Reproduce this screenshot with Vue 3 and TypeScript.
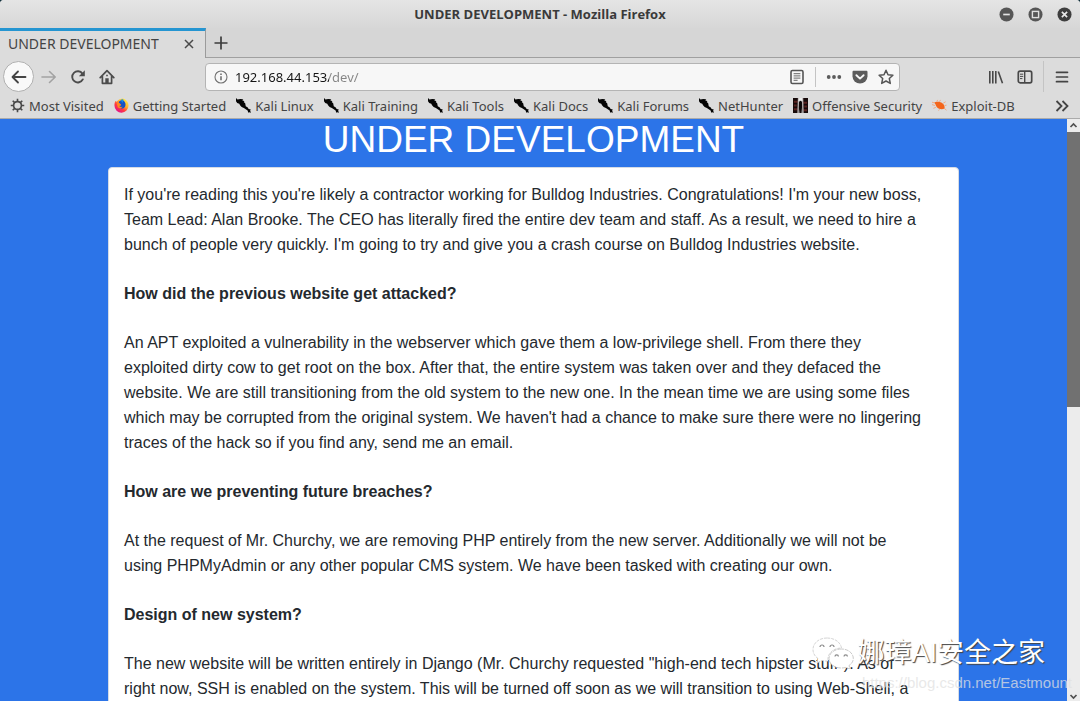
<script setup lang="ts">
import { ref } from 'vue'

type IconKind = 'gear' | 'firefox' | 'kali' | 'offsec' | 'exploit'

interface Bookmark {
  label: string
  icon: IconKind
}

interface Section {
  heading?: string
  body: string
}

const pageTitle = 'UNDER DEVELOPMENT'
const address = ref('192.168.44.153/dev/')

const bookmarks: Bookmark[] = [
  { label: 'Most Visited', icon: 'gear' },
  { label: 'Getting Started', icon: 'firefox' },
  { label: 'Kali Linux', icon: 'kali' },
  { label: 'Kali Training', icon: 'kali' },
  { label: 'Kali Tools', icon: 'kali' },
  { label: 'Kali Docs', icon: 'kali' },
  { label: 'Kali Forums', icon: 'kali' },
  { label: 'NetHunter', icon: 'kali' },
  { label: 'Offensive Security', icon: 'offsec' },
  { label: 'Exploit-DB', icon: 'exploit' },
]

const sections: Section[] = [
  {
    body: "If you're reading this you're likely a contractor working for Bulldog Industries. Congratulations! I'm your new boss, Team Lead: Alan Brooke. The CEO has literally fired the entire dev team and staff. As a result, we need to hire a bunch of people very quickly. I'm going to try and give you a crash course on Bulldog Industries website.",
  },
  {
    heading: 'How did the previous website get attacked?',
    body: "An APT exploited a vulnerability in the webserver which gave them a low-privilege shell. From there they exploited dirty cow to get root on the box. After that, the entire system was taken over and they defaced the website. We are still transitioning from the old system to the new one. In the mean time we are using some files which may be corrupted from the original system. We haven't had a chance to make sure there were no lingering traces of the hack so if you find any, send me an email.",
  },
  {
    heading: 'How are we preventing future breaches?',
    body: 'At the request of Mr. Churchy, we are removing PHP entirely from the new server. Additionally we will not be using PHPMyAdmin or any other popular CMS system. We have been tasked with creating our own.',
  },
  {
    heading: 'Design of new system?',
    body: 'The new website will be written entirely in Django (Mr. Churchy requested "high-end tech hipster stuff"). As of right now, SSH is enabled on the system. This will be turned off soon as we will transition to using Web-Shell, a',
  },
]
</script>

<template>
  <div class="window">
    <header class="chrome">
      <div class="titlebar">
        <span class="title">{{ pageTitle }} - Mozilla Firefox</span>
        <div class="controls">
          <button type="button" aria-label="Minimize">
            <svg viewBox="0 0 16 16"><circle cx="8" cy="8" r="7.5" fill="#565656" /><path d="M4.5 8h7" stroke="#e4e4e4" stroke-width="1.8" /></svg>
          </button>
          <button type="button" aria-label="Maximize">
            <svg viewBox="0 0 16 16"><circle cx="8" cy="8" r="7.5" fill="#565656" /><rect x="4.7" y="4.7" width="6.6" height="6.6" fill="none" stroke="#e0e0e0" stroke-width="1.5" /></svg>
          </button>
          <button type="button" aria-label="Close">
            <svg viewBox="0 0 16 16"><circle cx="8" cy="8" r="7.5" fill="#3e3e3e" /><path d="M5.2 5.2l5.6 5.6M10.8 5.2l-5.6 5.6" stroke="#e8e8e8" stroke-width="1.8" /></svg>
          </button>
        </div>
      </div>

      <div class="tabs">
        <div class="tab">
          <span>{{ pageTitle }}</span>
          <button type="button" aria-label="Close tab">
            <svg class="i16" viewBox="0 0 16 16"><path d="M4 4l8 8M12 4l-8 8" stroke="#4a4a4a" stroke-width="1.5" fill="none" /></svg>
          </button>
        </div>
        <div class="tab-rest">
          <button type="button" aria-label="New tab">
            <svg class="i16" viewBox="0 0 16 16"><path d="M8 1.5v13M1.5 8h13" stroke="#3c3c3c" stroke-width="1.7" fill="none" /></svg>
          </button>
        </div>
      </div>

      <div class="toolbar">
        <div class="nav-buttons">
          <button type="button" class="back" aria-label="Back">
            <svg class="i16" viewBox="0 0 16 16"><path d="M14.500 8H2M7 2.500L1.500 8 7 13.500" fill="none" stroke="#444" stroke-width="1.800" stroke-linejoin="round" stroke-linecap="round" /></svg>
          </button>
          <button type="button" aria-label="Forward">
            <svg class="i16" viewBox="0 0 16 16"><path d="M1 8h13M8.500 2.500L14.200 8l-5.700 5.500" fill="none" stroke="#a2a2a2" stroke-width="1.600" stroke-linejoin="round" stroke-linecap="round" /></svg>
          </button>
          <button type="button" aria-label="Reload">
            <svg class="i16" viewBox="0 0 16 16"><path d="M12.8 10.4A5.6 5.6 0 1 1 12.4 4.6" fill="none" stroke="#4c4c4c" stroke-width="1.9" stroke-linecap="round" /><path d="M14.8 1.200v6H8.800z" fill="#4c4c4c" /></svg>
          </button>
          <button type="button" aria-label="Home">
            <svg class="i16" viewBox="0 0 16 16"><path d="M1.200 8.600L8 1.600l6.800 7M3.400 7.500v6.800h9.200V7.500" fill="none" stroke="#4c4c4c" stroke-width="1.700" stroke-linejoin="round" stroke-linecap="round" /><path d="M6.300 14V9.200h3.400V14z" fill="#4c4c4c" /><path d="M7.200 5.700h1.600v1.600H7.200z" fill="#4c4c4c" /></svg>
          </button>
        </div>

        <form class="urlbar" @submit.prevent>
          <svg class="i14" viewBox="0 0 14 14"><circle cx="7" cy="7" r="6" fill="none" stroke="#727272" stroke-width="1.1" /><path d="M7 6.2v4M7 3.4v1.5" stroke="#666" stroke-width="1.5" /></svg>
          <input v-model="address" type="text" aria-label="Address" spellcheck="false" />
          <button type="button" aria-label="Reader view">
            <svg class="i16" viewBox="0 0 16 16"><rect x="2" y="1.5" width="12" height="13" rx="1.4" fill="none" stroke="#555" stroke-width="1.6" /><path d="M4.6 4.7h6.8M4.6 6.9h6.8M4.6 9.1h6.8M4.6 11.3h4" stroke="#666" stroke-width="1" /></svg>
          </button>
          <i class="divider" />
          <button type="button" aria-label="Page actions">
            <svg class="i16" viewBox="0 0 16 16" fill="#5c5c5c"><circle cx="2.7" cy="8" r="1.9" /><circle cx="8" cy="8" r="1.9" /><circle cx="13.3" cy="8" r="1.9" /></svg>
          </button>
          <button type="button" aria-label="Save to Pocket">
            <svg class="i16" viewBox="0 0 16 16"><path d="M1.8 1.7h12.4c.8 0 1.3.5 1.3 1.3v4.3a7.5 7.2 0 0 1-15 0V3c0-.8.5-1.3 1.3-1.3z" fill="#5c5c5c" /><path d="M4.4 6.2L8 9.6l3.6-3.4" fill="none" stroke="#f7f7f7" stroke-width="1.9" stroke-linecap="round" stroke-linejoin="round" /></svg>
          </button>
          <button type="button" aria-label="Bookmark this page">
            <svg class="i16" viewBox="0 0 16 16"><path d="M8 1.3l2 4.4 4.9.5-3.6 3.3 1 4.9L8 12l-4.3 2.4 1-4.9L1.1 6.2l4.9-.5z" fill="none" stroke="#565656" stroke-width="1.5" stroke-linejoin="round" /></svg>
          </button>
        </form>

        <div class="tools">
          <button type="button" aria-label="Library">
            <svg class="i16" viewBox="0 0 16 16"><path d="M1.800 2v12.500M4.800 2v12.500M7.800 2v12.500M10.300 2.500l4.200 11.800" fill="none" stroke="#484848" stroke-width="1.600" /></svg>
          </button>
          <button type="button" aria-label="Sidebars">
            <svg class="i16" viewBox="0 0 16 16"><rect x="1.300" y="2.200" width="13.400" height="11.600" rx="1.800" fill="none" stroke="#484848" stroke-width="1.700" /><path d="M7.700 2.200v11.600" stroke="#484848" stroke-width="1.400" /><path d="M3 5.200h3.200M3 7.400h3.200M3 9.600h2.400" stroke="#484848" stroke-width="1" /></svg>
          </button>
          <i class="divider tall" />
          <button type="button" aria-label="Open menu">
            <svg class="i16" viewBox="0 0 16 16"><path d="M2.500 3.300h11M2.500 8h11M2.500 12.700h11" stroke="#444" stroke-width="1.700" stroke-linecap="round" /></svg>
          </button>
        </div>
      </div>

      <nav class="bookmarks" aria-label="Bookmarks">
        <a v-for="b in bookmarks" :key="b.label" href="#">
          <svg v-if="b.icon === 'gear'" class="fav" viewBox="0 0 16 16">
            <circle cx="8" cy="8" r="4.200" fill="none" stroke="#4a4a4a" stroke-width="1.800" />
            <path d="M8 .8v3M8 12.200v3M.8 8h3M12.200 8h3M2.900 2.900L5 5M11 11l2.100 2.100M13.100 2.900L11 5M5 11l-2.100 2.100" stroke="#4a4a4a" stroke-width="1.700" />
          </svg>
          <svg v-else-if="b.icon === 'firefox'" class="fav" viewBox="0 0 16 16">
            <defs>
              <linearGradient id="flame" x1=".85" y1=".05" x2=".2" y2=".9"><stop offset="0" stop-color="#fff14a" /><stop offset=".4" stop-color="#ffb02a" /><stop offset=".68" stop-color="#ff3b40" /><stop offset="1" stop-color="#e31587" /></linearGradient>
            </defs>
            <path d="M1.500 3.200l1.400.7C4.400 2 6.400 1 9 .6c3.700.5 6.500 3.800 6.500 7.500A7.500 7.500 0 0 1 .5 8.300C.4 6.300.8 4.700 1.500 3.200z" fill="url(#flame)" />
            <path d="M5 4.200C7 2 10.900 2.300 12 5.200c1 3.100-.7 6-3.900 6-2.200 0-3.600-1.300-3.800-2.600L7.600 8 6 6.300z" fill="#1453c4" />
            <path d="M7 2.200C8.700.8 10 1.200 10.300 2.400L9 5.200z" fill="#158be8" />
            <path d="M3 5.500l3 .2 1.800 1.700-2.400 1 1.800 1.200 2.300-.4-2.700 2L4 10z" fill="#ff8a1c" />
          </svg>
          <svg v-else-if="b.icon === 'kali'" class="fav" viewBox="0 0 16 16">
            <path d="M0 0l1.600 1.600L4.500 1l3.300.3-1.200 1L9 3.500l-.8.8 1.600 1.200.6 3.200 2.200 1.500.6 1.300 2.800 1-1 .9 1 2.300-2-.6-.9.6-.7-2.500-2.400-1.400-1.600-1.200L6 9.600 4.300 7.800 3.500 6.200 1.300 5.200 0 3.400z" fill="#050505" />
          </svg>
          <svg v-else-if="b.icon === 'offsec'" class="fav" viewBox="0 0 16 16">
            <path d="M0 0h16v16H0z" fill="#170a0a" /><path d="M1 4h4M1 8h3M11 5h4M12 9h3M1 12h4M11 13h4" stroke="#58211f" stroke-width="2" />
            <path d="M5.200 0h1.300l-.6 16H4.700zM9.600 0h1.300l.4 16H10z" fill="#c9c3c3" /><path d="M6.500 0h3l.5 3-2 2-2-2z" fill="#eee" /><path d="M7 3h2v10H7z" fill="#070707" /><path d="M6.200 10l.8 6H5.600zM9.600 10l.8 6H9z" fill="#aaa" />
          </svg>
          <svg v-else class="fav" viewBox="0 0 16 16">
            <path d="M2.500 4.500c3.200-1 6.700-.7 9.200 1.500 1.500 1.400 2 3.300 1.700 5.300-3 1.200-6 .6-7.900-1.200C4.200 8.900 4 7.300 3.300 6.200z" fill="#f4651a" />
            <path d="M5 4l1-2M8 4l1-2M3 8L0 7M4 10l-2.500 1M12 5.500l2.500-1.500M13.500 8l2-.3M8 12l-1 1.500M13 11l2.500 2M0 4.500l3 .8" stroke="#f79863" stroke-width=".8" />
          </svg>
          <span>{{ b.label }}</span>
        </a>
        <button type="button" aria-label="More bookmarks">
          <svg class="i16" viewBox="0 0 16 16"><path d="M2.500 3l5 5-5 5M8.500 3l5 5-5 5" fill="none" stroke="#444" stroke-width="1.800" /></svg>
        </button>
      </nav>
    </header>

    <div class="viewport">
      <main class="page">
        <h1>{{ pageTitle }}</h1>
        <article class="card">
          <template v-for="s in sections" :key="s.body">
            <h2 v-if="s.heading">{{ s.heading }}</h2>
            <p>{{ s.body }}</p>
          </template>
        </article>
      </main>
      <div class="scrollbar" aria-hidden="true">
        <svg class="arrow" viewBox="0 0 13 13"><path d="M3.500 8l3-3 3 3" fill="none" stroke="#505050" stroke-width="1.700" /></svg>
        <div class="thumb" />
        <div class="track" />
        <svg class="arrow" viewBox="0 0 13 13"><path d="M3.500 7l3 3 3-3" fill="none" stroke="#505050" stroke-width="1.700" /></svg>
      </div>
    </div>

    <div class="watermark">
      <div class="brand">
        <svg viewBox="0 0 42 32">
          <path d="M15 1C7 1 1 6 1 12.500c0 4 2 7 5 9L5 26l5-2.600c2 .6 4 .8 6 .6C15 16 22 11 29.500 11 28.500 5 22.500 1 15 1z" fill="#fff" stroke="#c9c9c9" stroke-width=".8" stroke-dasharray="3 1" />
          <path d="M29.500 12C22 12 17 16.500 17 21.500S22 31 29.500 31c1.600 0 3-.2 4.300-.6L38 32l-1-3.500c2.700-1.700 4.300-4.200 4.300-7C41.300 16.500 36.500 12 29.500 12z" fill="#fff" stroke="#bbb" stroke-width=".8" stroke-dasharray="4 1" />
          <path d="M8 10a2 2 0 0 1 4 0M18 10a2 2 0 0 1 4 0M23 19.500a1.700 1.700 0 0 1 3.400 0M32 19.500a1.700 1.700 0 0 1 3.400 0" fill="none" stroke="#888" stroke-width="1.200" />
        </svg>
        <span>娜璋AI安全之家</span>
      </div>
      <div class="source">https://blog.csdn.net/Eastmount</div>
    </div>
  </div>
</template>

<style>
body {
  margin: 0;
  background: #12313c;
}
</style>

<style scoped>
.window {
  position: relative;
  display: flex;
  flex-direction: column;
  height: 100vh;
  overflow: hidden;
  border-radius: 4px 4px 0 0;
  font-family: "Noto Sans", "Open Sans", sans-serif;
  font-size: 13px;
  color: #444;
}

button {
  display: flex;
  align-items: center;
  justify-content: center;
  padding: 0;
  border: 0;
  background: none;
}

svg {
  display: block;
  flex: none;
}

.i16 {
  width: 16px;
  height: 16px;
}

.i14 {
  width: 14px;
  height: 14px;
}

.chrome {
  flex: none;
  background: #dcdcdc;
  border-bottom: 1px solid #ababab;
}

.titlebar {
  display: grid;
  grid-template-columns: 1fr auto 1fr;
  align-items: center;
  height: 28px;
  background: linear-gradient(#e5e5e5, #d7d7d7);
}

.title {
  grid-column: 2;
  font-family: "Open Sans", sans-serif;
  font-weight: 700;
  line-height: 28px;
  color: #3a3a3a;
}

.controls {
  display: flex;
  justify-content: flex-end;
  gap: 14px;
  padding-right: 8px;
}

.controls svg {
  width: 15px;
  height: 15px;
}

.tabs {
  display: flex;
  height: 30px;
  background: #d6d6d6;
}

.tab {
  box-sizing: border-box;
  display: flex;
  align-items: center;
  justify-content: space-between;
  width: 206px;
  padding: 0 8px 2px;
  border-top: 3px solid #2595d1;
  border-right: 1px solid #9b9b9b;
  background: #dcdcdc;
  font-size: 14px;
  white-space: nowrap;
}

.tab-rest {
  display: flex;
  flex: 1;
  align-items: center;
  padding-left: 7px;
  border-bottom: 1px solid #a0a0a0;
}

.toolbar {
  display: flex;
  align-items: center;
  height: 37px;
}

.nav-buttons {
  display: flex;
  align-items: center;
  gap: 13px;
  width: 202px;
  padding-left: 3px;
}

.back {
  box-sizing: border-box;
  width: 31px;
  height: 31px;
  margin-right: -7px;
  border: 1px solid #b0b0b0;
  border-radius: 50%;
  background: #f9f9f9;
}

.nav-buttons .back + button {
  margin-left: 1px;
}

.urlbar {
  box-sizing: border-box;
  display: flex;
  flex: 1;
  align-items: center;
  gap: 10px;
  height: 28px;
  padding: 0 5px 0 8px;
  border: 1px solid #b4b4b4;
  border-radius: 4px;
  background: #f7f7f7;
}

.urlbar input {
  flex: 1;
  min-width: 0;
  padding: 0;
  border: 0;
  outline: 0;
  margin-left: -3px;
  font: inherit;
  color: transparent;
  background: linear-gradient(90deg, #151515 94px, #858585 94px);
  -webkit-background-clip: text;
  background-clip: text;
}

.divider {
  width: 1px;
  height: 20px;
  background: #c4c4c4;
}

.tall {
  height: 31px;
}

.tools {
  display: flex;
  align-items: center;
  justify-content: flex-end;
  gap: 10px;
  width: 170px;
  padding-right: 10px;
}

.tools button:first-child {
  margin-right: 3px;
}

.bookmarks {
  display: flex;
  align-items: center;
  gap: 10px;
  height: 21px;
  padding: 0 10px 2px;
}

.bookmarks a {
  display: flex;
  align-items: center;
  gap: 4px;
  color: inherit;
  text-decoration: none;
  white-space: nowrap;
}

.bookmarks button {
  margin-left: auto;
}

.fav {
  width: 15px;
  height: 15px;
}

.viewport {
  display: flex;
  flex: 1;
  min-height: 0;
  background: #2c74e8;
}

.page {
  flex: 1;
  overflow: hidden;
  padding: 0 108px;
  font-family: "Liberation Sans", Arial, sans-serif;
}

h1 {
  margin: 0;
  font-size: 37px;
  font-weight: 400;
  line-height: 41px;
  height: 48px;
  text-align: center;
  color: #fff;
}

.card {
  padding: 14px 32px 14px 15px;
  border: 1px solid #d5dbe5;
  border-radius: 4px;
  background: #fff;
  font-size: 16px;
  line-height: 25px;
  color: #24292e;
}

.card h2,
.card p {
  margin: 0 0 24px;
  font-size: inherit;
}

.scrollbar {
  display: flex;
  flex-direction: column;
  width: 13px;
  background: #ececec;
}

.arrow {
  width: 13px;
  height: 13px;
}

.thumb {
  flex: 49;
  background: #717171;
}

.track {
  flex: 50;
}

.watermark {
  position: absolute;
  right: 8px;
  bottom: 8px;
  display: flex;
  flex-direction: column;
  align-items: flex-end;
}

.brand {
  display: flex;
  align-items: center;
  gap: 3px;
  margin-right: 27px;
  font-family: "Liberation Sans", "Noto Sans CJK SC", sans-serif;
  font-size: 27px;
  line-height: 40px;
  color: #fff;
  text-shadow: 1px 1px 1px #444;
}

.brand svg {
  width: 42px;
  height: 32px;
}

.source {
  font-family: "Liberation Sans", Arial, sans-serif;
  font-size: 15px;
  line-height: 20px;
  color: rgba(225, 225, 225, 0.75);
}
</style>
